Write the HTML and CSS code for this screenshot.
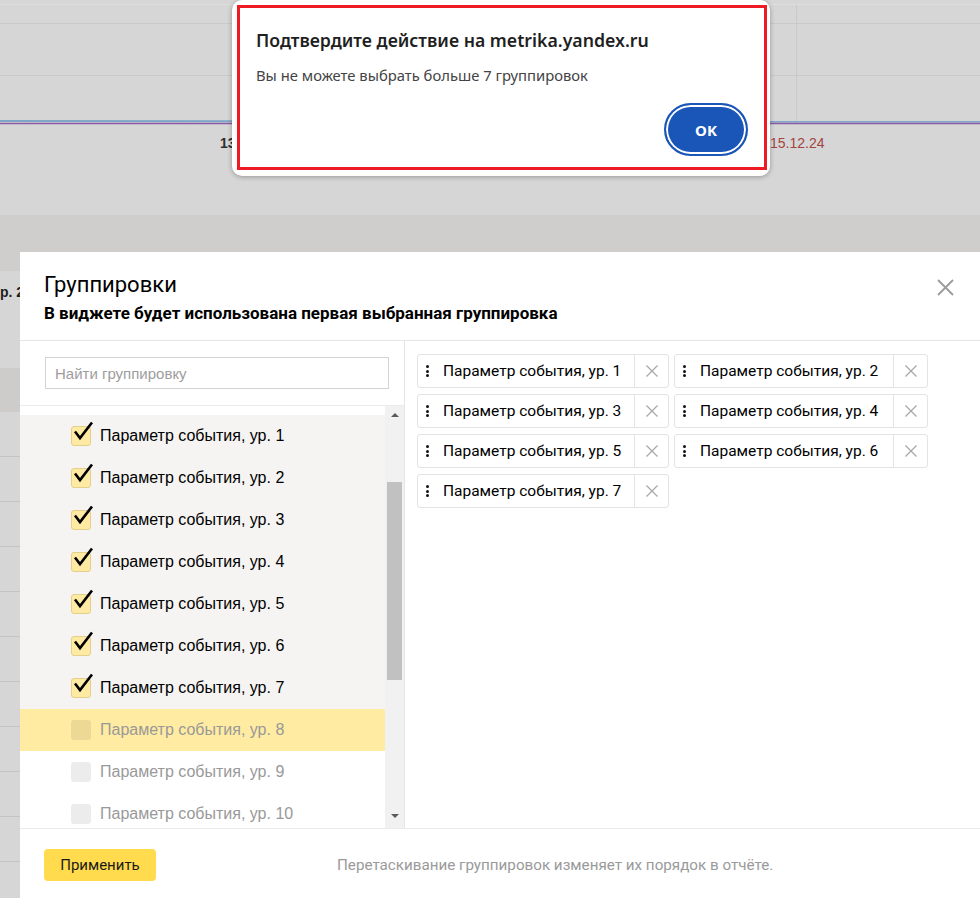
FILE: index.html
```html
<!DOCTYPE html>
<html lang="ru">
<head>
<meta charset="utf-8">
<title>Группировки</title>
<link rel="stylesheet" href="styles.css">
</head>
<body>
<div class="page">
  <svg class="chart" width="980" height="215" viewBox="0 0 980 215">
    <line x1="0" y1="4.5" x2="980" y2="4.5" stroke="#dedede" stroke-width="1"/>
    <line x1="0" y1="23.5" x2="980" y2="23.5" stroke="#c9c9c9" stroke-width="1"/>
    <line x1="0" y1="75.5" x2="980" y2="75.5" stroke="#c9c9c9" stroke-width="1"/>
    <line x1="796.5" y1="5" x2="796.5" y2="123" stroke="#c9c9c9" stroke-width="1"/>
    <line x1="0" y1="121" x2="980" y2="121.5" stroke="#7ea6c6" stroke-width="2"/>
    <line x1="0" y1="123.5" x2="980" y2="123.5" stroke="#8a5aa6" stroke-width="1.5"/>
    <text x="220" y="148" class="axis-dark">13</text>
    <text x="770" y="148" class="axis-red">15.12.24</text>
  </svg>
  <div class="band"></div>
  <div class="table">
    <div class="thead"><span class="th-text">р. 2</span></div>
    <div class="trow total"></div>
    <div class="trow"></div>
    <div class="trow"></div>
    <div class="trow"></div>
    <div class="trow"></div>
    <div class="trow"></div>
    <div class="trow"></div>
    <div class="trow"></div>
    <div class="trow"></div>
    <div class="trow"></div>
    <div class="trow"></div>
    <div class="trow"></div>
  </div>
</div>

<div class="modal">
  <div class="m-head">
    <div class="m-titles">
      <div class="m-title">Группировки</div>
      <div class="m-sub">В виджете будет использована первая выбранная группировка</div>
    </div>
    <button class="m-close" aria-label="Закрыть">
      <svg width="17" height="17" viewBox="0 0 17 17"><path d="M1 1L16 16M16 1L1 16" stroke="#9b9b9b" stroke-width="1.8" fill="none"/></svg>
    </button>
  </div>
  <div class="m-body">
    <div class="left">
      <div class="search"><input class="search-input" type="text" placeholder="Найти группировку"></div>
      <div class="list">
        <div class="items">
          <div class="item checked"><span class="cb"><svg class="tick" width="24" height="28" viewBox="0 0 24 28"><path d="M4 13.5L9 20L21 4.5" stroke="#000" stroke-width="2.6" fill="none"/></svg></span><span class="label">Параметр события, ур. 1</span></div>
          <div class="item checked"><span class="cb"><svg class="tick" width="24" height="28" viewBox="0 0 24 28"><path d="M4 13.5L9 20L21 4.5" stroke="#000" stroke-width="2.6" fill="none"/></svg></span><span class="label">Параметр события, ур. 2</span></div>
          <div class="item checked"><span class="cb"><svg class="tick" width="24" height="28" viewBox="0 0 24 28"><path d="M4 13.5L9 20L21 4.5" stroke="#000" stroke-width="2.6" fill="none"/></svg></span><span class="label">Параметр события, ур. 3</span></div>
          <div class="item checked"><span class="cb"><svg class="tick" width="24" height="28" viewBox="0 0 24 28"><path d="M4 13.5L9 20L21 4.5" stroke="#000" stroke-width="2.6" fill="none"/></svg></span><span class="label">Параметр события, ур. 4</span></div>
          <div class="item checked"><span class="cb"><svg class="tick" width="24" height="28" viewBox="0 0 24 28"><path d="M4 13.5L9 20L21 4.5" stroke="#000" stroke-width="2.6" fill="none"/></svg></span><span class="label">Параметр события, ур. 5</span></div>
          <div class="item checked"><span class="cb"><svg class="tick" width="24" height="28" viewBox="0 0 24 28"><path d="M4 13.5L9 20L21 4.5" stroke="#000" stroke-width="2.6" fill="none"/></svg></span><span class="label">Параметр события, ур. 6</span></div>
          <div class="item checked"><span class="cb"><svg class="tick" width="24" height="28" viewBox="0 0 24 28"><path d="M4 13.5L9 20L21 4.5" stroke="#000" stroke-width="2.6" fill="none"/></svg></span><span class="label">Параметр события, ур. 7</span></div>
          <div class="item hover"><span class="cb"></span><span class="label">Параметр события, ур. 8</span></div>
          <div class="item"><span class="cb"></span><span class="label">Параметр события, ур. 9</span></div>
          <div class="item"><span class="cb"></span><span class="label">Параметр события, ур. 10</span></div>
        </div>
        <div class="sbar">
          <div class="sb-arrow"><span class="tri-up"></span></div>
          <div class="sb-thumb"></div>
          <div class="sb-space"></div>
          <div class="sb-arrow down"><span class="tri-down"></span></div>
        </div>
      </div>
    </div>
    <div class="right">
      <div class="chips">
        <div class="chip"><span class="handle"><i></i><i></i><i></i></span><span class="chip-label">Параметр события, ур. 1</span><span class="chip-x"><svg width="12" height="12" viewBox="0 0 12 12"><path d="M0.5 0.5L11.5 11.5M11.5 0.5L0.5 11.5" stroke="#a6a6a6" stroke-width="1.2" fill="none"/></svg></span></div>
        <div class="chip"><span class="handle"><i></i><i></i><i></i></span><span class="chip-label">Параметр события, ур. 2</span><span class="chip-x"><svg width="12" height="12" viewBox="0 0 12 12"><path d="M0.5 0.5L11.5 11.5M11.5 0.5L0.5 11.5" stroke="#a6a6a6" stroke-width="1.2" fill="none"/></svg></span></div>
        <div class="chip"><span class="handle"><i></i><i></i><i></i></span><span class="chip-label">Параметр события, ур. 3</span><span class="chip-x"><svg width="12" height="12" viewBox="0 0 12 12"><path d="M0.5 0.5L11.5 11.5M11.5 0.5L0.5 11.5" stroke="#a6a6a6" stroke-width="1.2" fill="none"/></svg></span></div>
        <div class="chip"><span class="handle"><i></i><i></i><i></i></span><span class="chip-label">Параметр события, ур. 4</span><span class="chip-x"><svg width="12" height="12" viewBox="0 0 12 12"><path d="M0.5 0.5L11.5 11.5M11.5 0.5L0.5 11.5" stroke="#a6a6a6" stroke-width="1.2" fill="none"/></svg></span></div>
        <div class="chip"><span class="handle"><i></i><i></i><i></i></span><span class="chip-label">Параметр события, ур. 5</span><span class="chip-x"><svg width="12" height="12" viewBox="0 0 12 12"><path d="M0.5 0.5L11.5 11.5M11.5 0.5L0.5 11.5" stroke="#a6a6a6" stroke-width="1.2" fill="none"/></svg></span></div>
        <div class="chip"><span class="handle"><i></i><i></i><i></i></span><span class="chip-label">Параметр события, ур. 6</span><span class="chip-x"><svg width="12" height="12" viewBox="0 0 12 12"><path d="M0.5 0.5L11.5 11.5M11.5 0.5L0.5 11.5" stroke="#a6a6a6" stroke-width="1.2" fill="none"/></svg></span></div>
        <div class="chip"><span class="handle"><i></i><i></i><i></i></span><span class="chip-label">Параметр события, ур. 7</span><span class="chip-x"><svg width="12" height="12" viewBox="0 0 12 12"><path d="M0.5 0.5L11.5 11.5M11.5 0.5L0.5 11.5" stroke="#a6a6a6" stroke-width="1.2" fill="none"/></svg></span></div>
      </div>
    </div>
  </div>
  <div class="m-foot">
    <button class="apply">Применить</button>
    <span class="hint">Перетаскивание группировок изменяет их порядок в отчёте.</span>
  </div>
</div>

<div class="alert">
  <div class="alert-mark"></div>
  <div class="alert-title">Подтвердите действие на metrika.yandex.ru</div>
  <div class="alert-text">Вы не можете выбрать больше 7 группировок</div>
  <div class="alert-actions"><button class="ok">OK</button></div>
</div>
</body>
</html>
```

FILE: styles.css
```css
* { box-sizing: border-box; }

html, body { margin: 0; padding: 0; }

body {
  width: 980px;
  height: 898px;
  overflow: hidden;
  position: relative;
  background: #d6d6d6;
  font-family: "Liberation Sans", Arial, sans-serif;
}

/* ---------- dimmed page behind ---------- */
.chart { display: block; }
.axis-dark { font: bold 14px "Liberation Sans", Arial, sans-serif; fill: #2e2e2e; }
.axis-red { font: 14px "Liberation Sans", Arial, sans-serif; fill: #a3443f; }

.band { height: 56px; background: #cfcecd; }

.thead {
  height: 97px;
  padding-top: 12px;
  font: bold 14px/18px "Liberation Sans", Arial, sans-serif;
  color: #1e1e1e;
  white-space: nowrap;
}
.th-text { display: inline-block; }

.trow { height: 45px; border-bottom: 1px solid #c3c3c3; }
.trow.total { height: 44px; background: #cdccca; border-bottom: none; }

/* ---------- modal ---------- */
.modal {
  position: absolute;
  left: 20px;
  top: 252px;
  width: 960px;
  height: 646px;
  background: #fff;
  display: flex;
  flex-direction: column;
  font-family: Roboto, "Noto Sans", sans-serif;
  color: #000;
}

.m-head {
  height: 89px;
  flex: none;
  display: flex;
  justify-content: space-between;
  align-items: flex-start;
  padding: 0 26px 0 24px;
  border-bottom: 1px solid #e6e6e6;
}
.m-titles { padding-top: 20px; }
.m-title { font-size: 22px; line-height: 26px; font-weight: 400; }
.m-sub { font-size: 17px; line-height: 20px; font-weight: 700; margin-top: 5px; }

.m-close {
  margin-top: 27px;
  width: 17px;
  height: 17px;
  padding: 0;
  border: none;
  background: none;
  display: flex;
}

.m-body { flex: 1; display: flex; min-height: 0; }

.left {
  width: 385px;
  flex: none;
  border-right: 1px solid #e6e6e6;
  display: flex;
  flex-direction: column;
}

.search {
  height: 65px;
  flex: none;
  padding: 16px 15px 0 25px;
  border-bottom: 1px solid #ebebeb;
}
.search-input {
  display: block;
  width: 344px;
  height: 32px;
  margin: 0;
  border: 1px solid #d3d3d3;
  padding: 0 9px;
  font: 15px "Liberation Sans", Arial, sans-serif;
  color: #000;
  background: #fff;
  outline: none;
}
.search-input::placeholder { color: #9d9d9d; }

.list { flex: 1; display: flex; min-height: 0; }
.items { flex: 1; overflow: hidden; padding-top: 9px; }

.item {
  height: 42px;
  display: flex;
  align-items: center;
  padding-left: 51px;
  gap: 9px;
  font: 16px "Liberation Sans", Arial, sans-serif;
  color: #999;
  white-space: nowrap;
}
.item.checked { background: #f5f4f2; color: #000; }
.item.hover { background: #ffeba1; }

.cb {
  position: relative;
  width: 20px;
  height: 20px;
  flex: none;
  border-radius: 3px;
  background: rgba(0, 0, 0, 0.075);
}
.item.checked .cb {
  background: #feeaa2;
  border: 1px solid #e4d08a;
}
.tick { position: absolute; left: -1px; top: -9px; }

.sbar {
  width: 19px;
  flex: none;
  background: #f1f1f1;
  display: flex;
  flex-direction: column;
  padding: 0 2px 4px;
}
.sb-arrow { height: 17px; display: flex; align-items: center; justify-content: center; }
.tri-up, .tri-down { width: 0; height: 0; border-left: 4px solid transparent; border-right: 4px solid transparent; }
.tri-up { border-bottom: 4px solid #5a5a5a; }
.tri-down { border-top: 4px solid #5a5a5a; }
.sb-thumb { height: 198px; margin-top: 59px; background: #c1c1c1; }
.sb-space { flex: 1; }

.right { flex: 1; padding: 13px 12px; }
.chips {
  display: grid;
  grid-template-columns: 252px 254px;
  column-gap: 5px;
  row-gap: 6px;
}
.chip {
  height: 34px;
  display: flex;
  align-items: stretch;
  border: 1px solid #e3e3e3;
  border-radius: 3px;
  background: #fff;
}
.handle {
  width: 25px;
  flex: none;
  display: flex;
  flex-direction: column;
  justify-content: center;
  gap: 1.5px;
  padding-left: 8px;
}
.handle i { display: block; width: 3px; height: 3px; border-radius: 50%; background: #111; }
.chip-label {
  flex: 1;
  display: flex;
  align-items: center;
  font-size: 15.5px;
  color: #000;
  white-space: nowrap;
}
.chip-x {
  width: 34px;
  flex: none;
  border-left: 1px solid #e3e3e3;
  display: flex;
  align-items: center;
  justify-content: center;
}

.m-foot {
  height: 70px;
  flex: none;
  border-top: 1px solid #ebebeb;
  display: flex;
  align-items: flex-start;
  padding: 20px 24px 0;
}
.apply {
  width: 112px;
  height: 32px;
  border: none;
  border-radius: 4px;
  background: #ffdb4d;
  font-family: Roboto, "Noto Sans", sans-serif;
  font-size: 15px;
  color: #1a1a1a;
  padding: 0;
}
.hint {
  margin-left: 181px;
  line-height: 32px;
  font-size: 15.2px;
  color: #9a9a9a;
  white-space: nowrap;
}

/* ---------- browser alert ---------- */
.alert {
  position: absolute;
  left: 232px;
  top: 0;
  width: 538px;
  height: 176px;
  background: #fff;
  border-radius: 10px;
  box-shadow: 0 1px 5px rgba(0, 0, 0, 0.3);
  padding: 26px 22px 0 24px;
  font-family: "Noto Sans", "Open Sans", sans-serif;
}
.alert-mark {
  position: absolute;
  left: 5px;
  top: 5px;
  right: 3px;
  bottom: 6px;
  border: 3px solid #ee1b24;
  pointer-events: none;
}
.alert-title { font-size: 17.7px; line-height: 28px; font-weight: 600; color: #1f1f1f; white-space: nowrap; }
.alert-text { font-size: 14.8px; line-height: 20px; margin-top: 11px; color: #444; white-space: nowrap; }
.alert-actions { display: flex; justify-content: flex-end; margin-top: 18px; }
.ok {
  width: 84px;
  height: 53px;
  border-radius: 27px;
  border: 2px solid #1a56b8;
  box-shadow: inset 0 0 0 2px #fff;
  background: #1a56b8;
  color: #fff;
  font-family: "Noto Sans", "Open Sans", sans-serif;
  font-weight: 700;
  font-size: 15px;
  padding: 0;
}
```
